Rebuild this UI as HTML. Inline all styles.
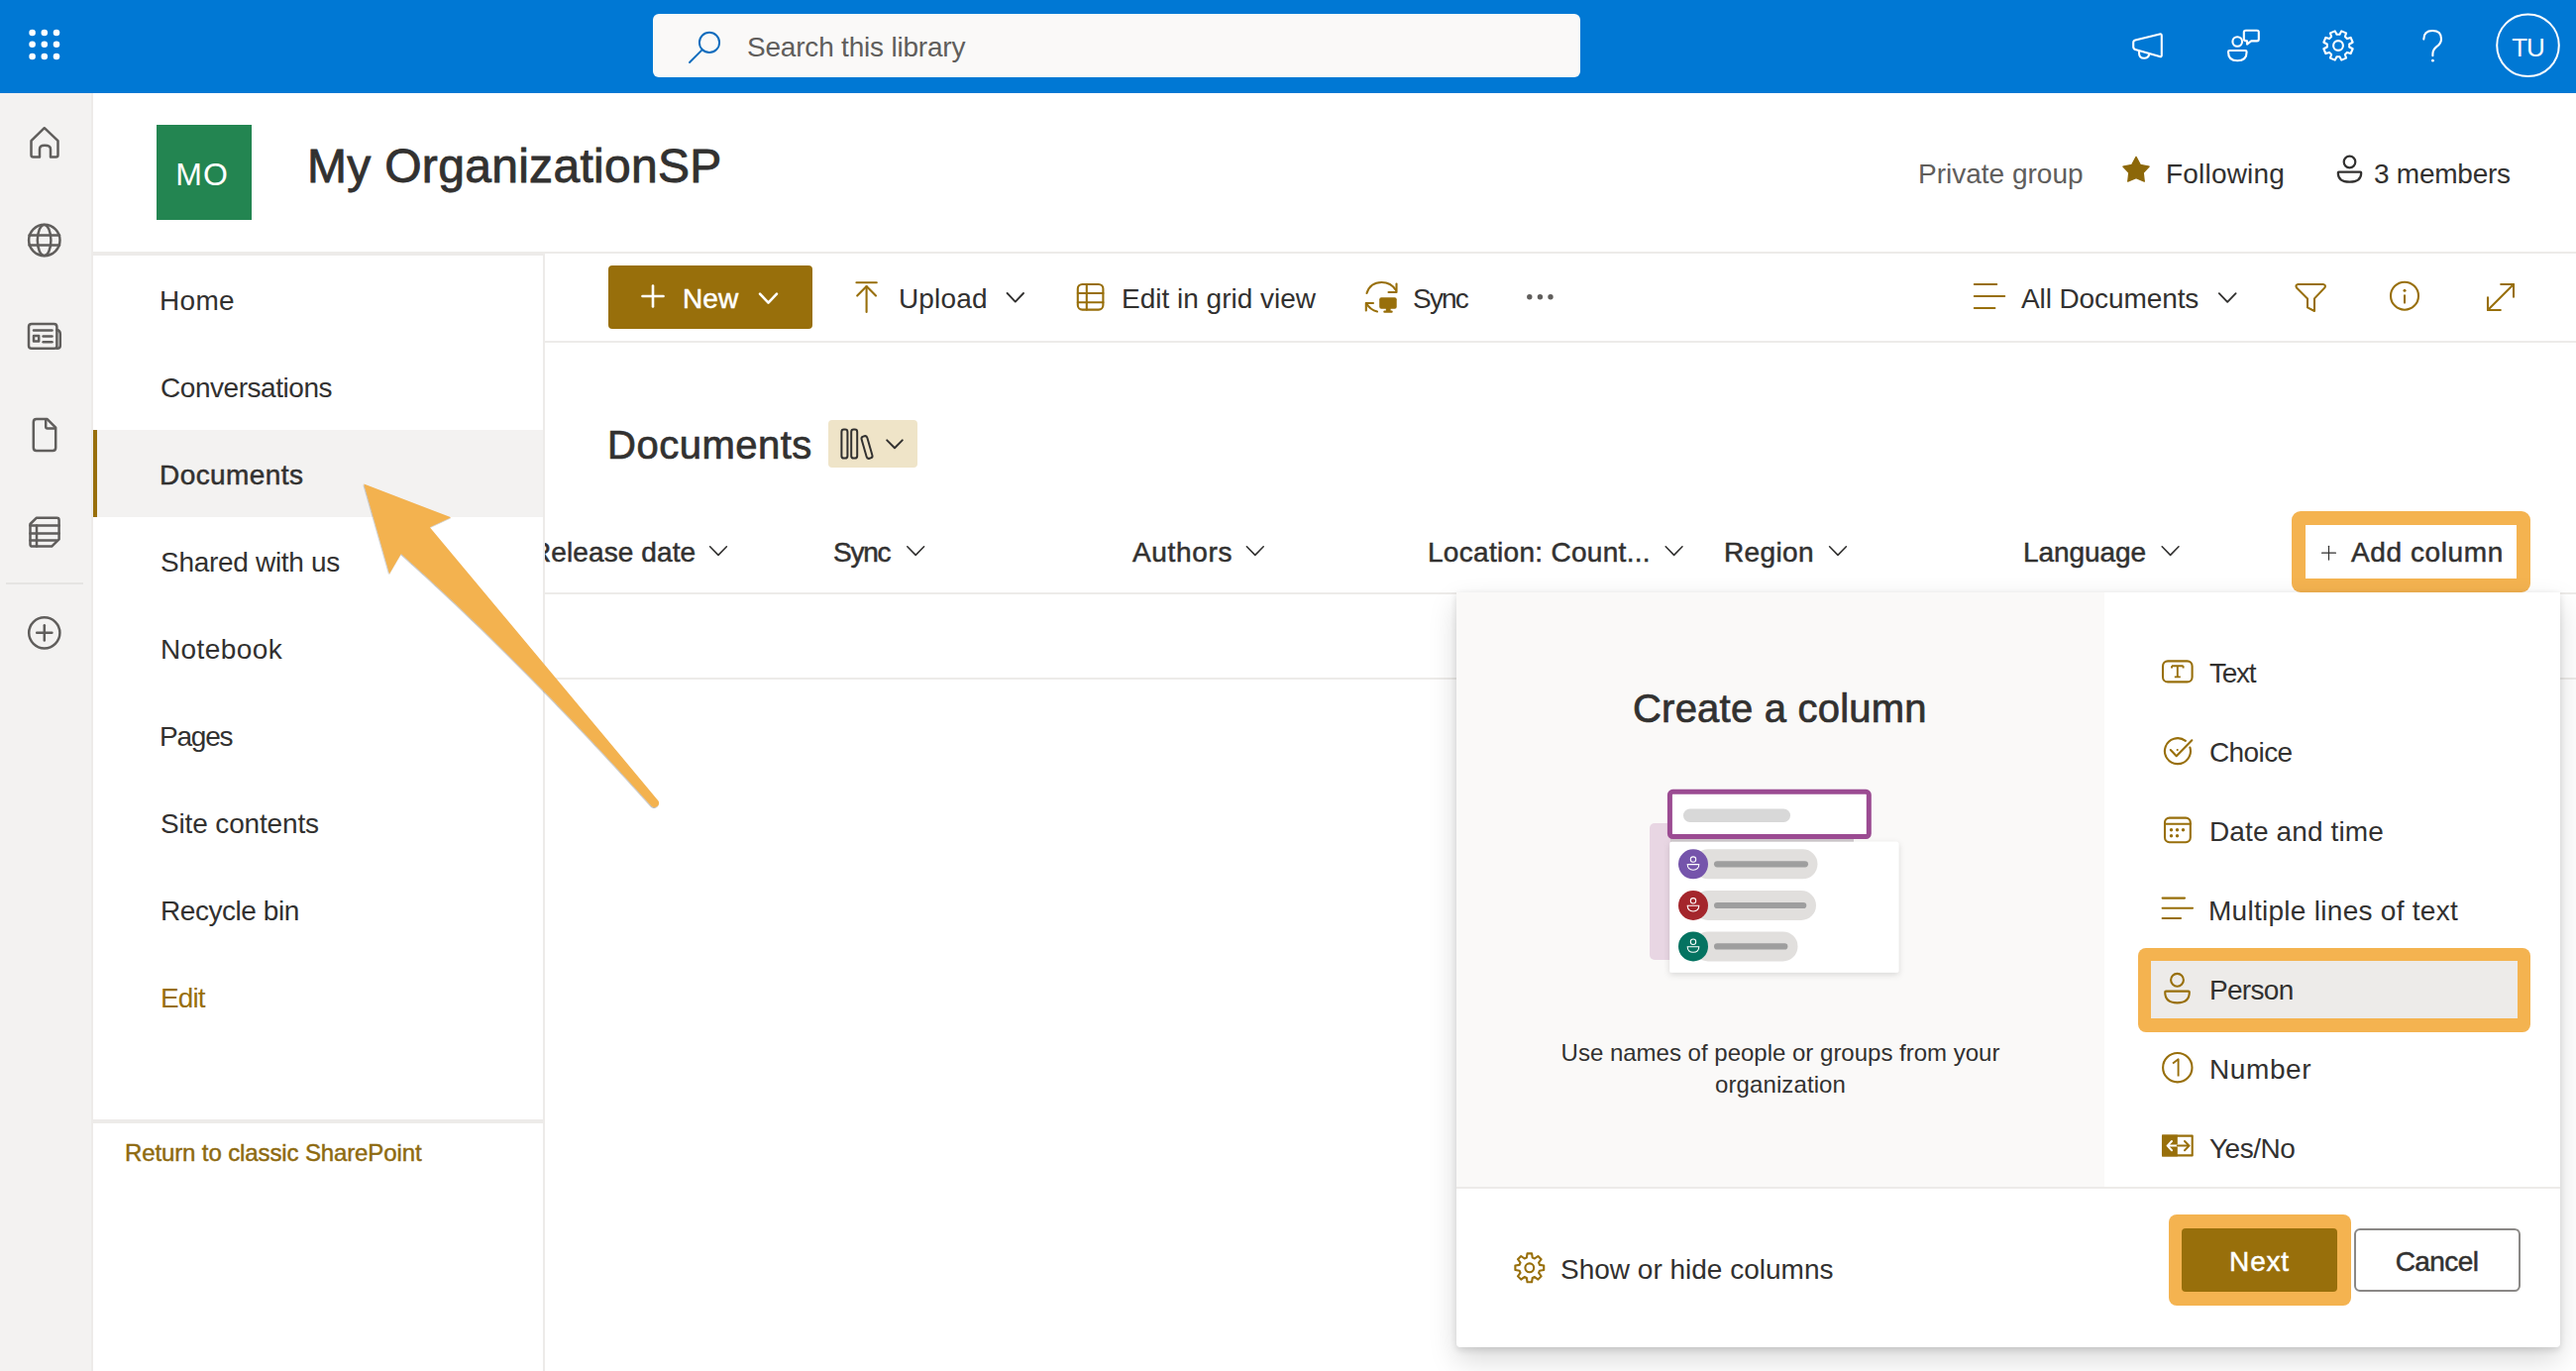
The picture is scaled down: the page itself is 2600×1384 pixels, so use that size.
<!DOCTYPE html>
<html><head><meta charset="utf-8">
<style>
html,body{margin:0;padding:0;width:2600px;height:1384px;overflow:hidden;background:#fff;font-family:"Liberation Sans",sans-serif;color:#323130}
.a{position:absolute}
.t{position:absolute;white-space:nowrap;line-height:28px;font-size:28px}
.s1{-webkit-text-stroke:0.45px currentColor}.s2{-webkit-text-stroke:0.5px currentColor}.s3{-webkit-text-stroke:0.72px currentColor}.s4{-webkit-text-stroke:0.86px currentColor}
svg{position:absolute;overflow:visible}
</style></head><body>

<!-- ===== Suite bar ===== -->
<div class="a" style="left:0;top:0;width:2600px;height:94px;background:#0078d4"></div>
<svg style="left:0;top:0" width="94" height="94">
  <g fill="#fff">
    <circle cx="32.6" cy="33" r="3.3"/><circle cx="44.8" cy="33" r="3.3"/><circle cx="57" cy="33" r="3.3"/>
    <circle cx="32.6" cy="44.8" r="3.3"/><circle cx="44.8" cy="44.8" r="3.3"/><circle cx="57" cy="44.8" r="3.3"/>
    <circle cx="32.6" cy="57" r="3.3"/><circle cx="44.8" cy="57" r="3.3"/><circle cx="57" cy="57" r="3.3"/>
  </g>
</svg>
<div class="a" style="left:659px;top:14px;width:936px;height:64px;background:#faf9f8;border-radius:6px"></div>
<svg style="left:0;top:0" width="2600" height="94">
  <g fill="none" stroke="#0f6cbd" stroke-width="1.9" stroke-linecap="round">
    <circle cx="716" cy="42.9" r="10.1"/>
    <line x1="708.6" y1="50.3" x2="696" y2="63"/>
  </g>
</svg>
<div class="t" style="left:754px;top:34px;color:#605e5c;letter-spacing:-0.2px">Search this library</div>


<div class="t" style="left:2521px;width:61px;text-align:center;top:35px;font-size:26px;line-height:26px;color:#fff;letter-spacing:-1px">TU</div>

<!-- ===== Left app rail ===== -->
<div class="a" style="left:0;top:94px;width:94px;height:1290px;background:#f3f2f1"></div>
<div class="a" style="left:92px;top:94px;width:2px;height:1290px;background:#edebe9"></div>

<!-- ===== Site header ===== -->
<div class="a" style="left:158px;top:126px;width:96px;height:96px;background:#238551"></div>
<div class="t" style="left:156px;width:96px;text-align:center;top:160px;font-size:32px;line-height:32px;color:#fff;letter-spacing:1px">MO</div>
<div class="t s4" style="left:310px;top:144px;font-size:48px;line-height:48px;letter-spacing:0.3px">My OrganizationSP</div>
<div class="t" style="left:1936px;top:162px;color:#605e5c">Private group</div>
<div class="t" style="left:2186px;top:162px;letter-spacing:0.2px">Following</div>
<div class="t" style="left:2396px;top:162px;letter-spacing:-0.25px">3 members</div>

<!-- header bottom line -->
<div class="a" style="left:94px;top:254px;width:2506px;height:2px;background:#edebe9"></div>
<div class="a" style="left:94px;top:256px;width:455px;height:2px;background:#edebe9"></div>

<!-- ===== Left nav ===== -->
<div class="a" style="left:548px;top:256px;width:2px;height:1128px;background:#edebe9"></div>
<div class="a" style="left:94px;top:434px;width:454px;height:88px;background:#f3f2f1"></div>
<div class="a" style="left:94px;top:434px;width:4px;height:88px;background:#986f0b"></div>
<div class="t" style="left:161px;top:290px;letter-spacing:0.3px">Home</div>
<div class="t" style="left:162px;top:378px;letter-spacing:-0.45px">Conversations</div>
<div class="t s2" style="left:161px;top:466px;letter-spacing:0.42px">Documents</div>
<div class="t" style="left:162px;top:554px;letter-spacing:-0.3px">Shared with us</div>
<div class="t" style="left:162px;top:642px;letter-spacing:0.4px">Notebook</div>
<div class="t" style="left:161px;top:730px;letter-spacing:-1.2px">Pages</div>
<div class="t" style="left:162px;top:818px;letter-spacing:-0.15px">Site contents</div>
<div class="t" style="left:162px;top:906px;letter-spacing:-0.45px">Recycle bin</div>
<div class="t" style="left:162px;top:994px;color:#986f0b;letter-spacing:-0.9px">Edit</div>
<div class="a" style="left:94px;top:1130px;width:454px;height:4px;background:#edebe9"></div>
<div class="t s1" style="left:126px;top:1152px;font-size:24px;line-height:24px;color:#8e6a10;letter-spacing:-0.12px">Return to classic SharePoint</div>

<!-- ===== Command bar ===== -->
<div class="a" style="left:550px;top:344px;width:2050px;height:2px;background:#edebe9"></div>
<div class="a" style="left:614px;top:268px;width:206px;height:64px;background:#986f0b;border-radius:4px"></div>
<div class="t s2" style="left:689px;top:288px;color:#fff;letter-spacing:0.05px">New</div>
<div class="t" style="left:907px;top:288px;letter-spacing:0.15px">Upload</div>
<div class="t" style="left:1132px;top:288px">Edit in grid view</div>
<div class="t" style="left:1426px;top:288px;letter-spacing:-1.8px">Sync</div>
<div class="t" style="left:2040px;top:288px;letter-spacing:-0.1px">All Documents</div>

<!-- ===== Documents title ===== -->
<div class="t s3" style="left:613px;top:429px;font-size:40px;line-height:40px;letter-spacing:0.5px">Documents</div>
<div class="a" style="left:836px;top:424px;width:90px;height:48px;background:#efe4c8;border-radius:4px"></div>

<!-- ===== Column headers ===== -->
<div class="a" style="left:550px;top:500px;width:2050px;height:100px;overflow:hidden">
  <div class="t s2" style="left:-14px;top:44px;letter-spacing:0.1px">Release date</div>
  <div class="t s2" style="left:291px;top:44px;letter-spacing:-1.25px">Sync</div>
  <div class="t s2" style="left:593px;top:44px;letter-spacing:0.65px">Authors</div>
  <div class="t s2" style="left:891px;top:44px;letter-spacing:0.3px">Location: Count...</div>
  <div class="t s2" style="left:1190px;top:44px;letter-spacing:0.35px">Region</div>
  <div class="t s2" style="left:1492px;top:44px;letter-spacing:-0.07px">Language</div>
</div>
<div class="a" style="left:550px;top:598px;width:2050px;height:2px;background:#edebe9"></div>
<div class="a" style="left:550px;top:684px;width:2050px;height:2px;background:#edebe9"></div>

<!-- Add column highlight -->
<div class="a" style="left:2313px;top:516px;width:241px;height:82px;background:#f4b350;border-radius:9px"></div>
<div class="a" style="left:2327px;top:530px;width:213px;height:54px;background:#fff"></div>
<div class="t s2" style="left:2373px;top:544px;letter-spacing:0.6px">Add column</div>

<!-- ===== Panel ===== -->
<div class="a" style="left:1470px;top:598px;width:1114px;height:762px;background:#fff;border-radius:0 0 4px 4px;box-shadow:0 12.8px 28.8px rgba(0,0,0,0.15),0 2.4px 7.2px rgba(0,0,0,0.12)"></div>
<div class="a" style="left:1470px;top:598px;width:654px;height:600px;background:#faf9f8"></div>
<div class="a" style="left:1470px;top:1198px;width:1114px;height:2px;background:#edebe9"></div>
<div class="t s3" style="left:1648px;top:695px;font-size:40px;line-height:40px;letter-spacing:0.22px">Create a column</div>
<div class="t" style="left:1470px;width:654px;text-align:center;top:1051px;font-size:24px;line-height:24px">Use names of people or groups from your</div>
<div class="t" style="left:1470px;width:654px;text-align:center;top:1083px;font-size:24px;line-height:24px;letter-spacing:0.1px">organization</div>

<!-- list -->
<div class="a" style="left:2158px;top:957px;width:396px;height:85px;background:#f4b350;border-radius:8px"></div>
<div class="a" style="left:2171px;top:970px;width:370px;height:58px;background:#edebe9"></div>
<div class="t" style="left:2230px;top:666px;letter-spacing:-1.3px">Text</div>
<div class="t" style="left:2230px;top:746px;letter-spacing:-0.6px">Choice</div>
<div class="t" style="left:2230px;top:826px;letter-spacing:0.12px">Date and time</div>
<div class="t" style="left:2229px;top:906px;letter-spacing:0.28px">Multiple lines of text</div>
<div class="t" style="left:2230px;top:986px;letter-spacing:-0.7px">Person</div>
<div class="t" style="left:2230px;top:1066px;letter-spacing:0.6px">Number</div>
<div class="t" style="left:2230px;top:1146px;letter-spacing:-0.5px">Yes/No</div>

<!-- footer -->
<div class="t" style="left:1575px;top:1268px">Show or hide columns</div>
<div class="a" style="left:2189px;top:1226px;width:184px;height:92px;background:#f4b350;border-radius:8px"></div>
<div class="a" style="left:2202px;top:1240px;width:157px;height:64px;background:#986f0b;border-radius:4px"></div>
<div class="t s2" style="left:2202px;width:157px;text-align:center;top:1260px;color:#fff;letter-spacing:0.8px">Next</div>
<div class="a" style="left:2376px;top:1240px;width:164px;height:60px;border:2px solid #8a8886;border-radius:6px;background:#fff"></div>
<div class="t s2" style="left:2376px;width:167px;text-align:center;top:1260px;letter-spacing:-0.6px">Cancel</div>

<!--ICONS-->
<svg style="left:0;top:0" width="2600" height="1384" viewBox="0 0 2600 1384">
  <!-- ===== suite bar icons ===== -->
  <g fill="none" stroke="#fff" stroke-width="2.1" stroke-linejoin="round" stroke-linecap="round">
    <path d="M2153.2 43 Q2153.2 41 2155.2 40.5 L2179.8 34.4 Q2181.8 33.9 2181.8 36 L2181.8 55.8 Q2181.8 57.8 2179.8 57.1 L2155.2 49.9 Q2153.2 49.3 2153.2 47.2 Z"/>
    <path d="M2159 51.6 L2159 53.4 Q2159 58.8 2164.2 58.8 Q2168 58.8 2169.2 55.2"/>
    <circle cx="2258.2" cy="42" r="4.8"/>
    <path d="M2249 52.4 Q2249 51 2250.4 51 L2266.2 51 Q2267.6 51 2267.6 52.4 Q2267.6 61.2 2258.3 61.2 Q2249 61.2 2249 52.4 Z"/>
    <path d="M2266.8 30.8 L2278 30.8 Q2279.8 30.8 2279.8 32.6 L2279.8 39.6 Q2279.8 41.4 2278 41.4 L2272.2 41.4 L2268 44.6 L2268 41.4 Q2264.8 41.4 2264.8 39.6 L2264.8 32.6 Q2264.8 30.8 2266.8 30.8 Z"/>
    <path d="M2371.20 47.47 L2374.64 49.25 L2372.65 54.06 L2368.96 52.88 L2366.88 54.96 L2368.06 58.65 L2363.25 60.64 L2361.47 57.20 L2358.53 57.20 L2356.75 60.64 L2351.94 58.65 L2353.12 54.96 L2351.04 52.88 L2347.35 54.06 L2345.36 49.25 L2348.80 47.47 L2348.80 44.53 L2345.36 42.75 L2347.35 37.94 L2351.04 39.12 L2353.12 37.04 L2351.94 33.35 L2356.75 31.36 L2358.53 34.80 L2361.47 34.80 L2363.25 31.36 L2368.06 33.35 L2366.88 37.04 L2368.96 39.12 L2372.65 37.94 L2374.64 42.75 L2371.20 44.53 Z"/>
    <circle cx="2360" cy="46" r="4.9"/>
    <path d="M2446.3 39.6 Q2446.3 31 2455.2 31 Q2464 31 2464 39.2 Q2464 43.8 2459.3 47.2 Q2455.4 50.2 2455.4 54.6 L2455.4 56.2"/>
  </g>
  <circle cx="2455.4" cy="61.2" r="1.4" fill="#fff"/>
  <circle cx="2551.5" cy="45.8" r="31.3" fill="none" stroke="#fff" stroke-width="2"/>

  <!-- ===== app rail icons ===== -->
  <g fill="none" stroke="#605e5c" stroke-width="2.5" stroke-linejoin="round" stroke-linecap="round">
    <path d="M31.5 142.2 L44.8 129.2 L58.5 142.2 L58.5 156.6 Q58.5 158.6 56.5 158.6 L51 158.6 L51 150.5 Q51 146.8 45 146.8 Q40 146.8 40 150.5 L40 158.6 L33.5 158.6 Q31.5 158.6 31.5 156.6 Z"/>
    <circle cx="44.8" cy="242.5" r="15.7"/>
    <ellipse cx="44.6" cy="242.5" rx="6.8" ry="15.6"/>
    <line x1="29.5" y1="237.6" x2="60" y2="237.6"/>
    <line x1="29.5" y1="247.4" x2="60" y2="247.4"/>
    <path d="M29 329.8 Q29 327 32 327 L54.5 327 Q57.4 327 57.4 330 L57.4 349.5 Q57.4 351.8 55 351.8 L32 351.8 Q29 351.8 29 349 Z"/>
    <path d="M57.4 333 Q60.8 333.5 60.8 337 L60.8 349 Q60.8 351.8 57.6 351.8"/>
    <line x1="34" y1="333.4" x2="52.5" y2="333.4"/>
    <rect x="34" y="339" width="5.2" height="5.4"/>
    <line x1="43.6" y1="339.6" x2="52.5" y2="339.6"/>
    <line x1="43.6" y1="345.2" x2="52.5" y2="345.2"/>
    <path d="M36.8 422.9 L47.4 422.9 L56.2 431.6 L56.2 452 Q56.2 455 53.2 455 L36.8 455 Q33.8 455 33.8 452 L33.8 425.9 Q33.8 422.9 36.8 422.9 Z"/>
    <path d="M46.2 423.4 L46.2 430.8 Q46.2 432.6 48 432.6 L55.6 432.6"/>
    <path d="M36.7 522.8 L57.4 522.8 Q59.6 522.8 59.6 525 L59.6 544.4 L52.2 551.6 L32.8 551.6 Q30.5 551.6 30.5 549.4 L30.5 529 Z"/>
    <line x1="30.5" y1="530.4" x2="59.6" y2="530.4"/>
    <line x1="30.5" y1="538.6" x2="59.6" y2="538.6"/>
    <line x1="30.5" y1="545.6" x2="57" y2="545.6"/>
    <line x1="37" y1="530.4" x2="37" y2="551.6"/>
    <circle cx="44.8" cy="638.8" r="15.6"/>
    <line x1="37.2" y1="638.8" x2="52.4" y2="638.8"/>
    <line x1="44.8" y1="631.2" x2="44.8" y2="646.4"/>
  </g>
  <line x1="6" y1="589" x2="84" y2="589" stroke="#e1dfdd" stroke-width="1.5"/>

  <!-- ===== header icons ===== -->
  <path d="M2156 158.4 L2160.3 166.4 L2169.2 168.1 L2163.3 174.4 L2164.3 183.2 L2156 179.6 L2147.7 183.2 L2148.7 174.4 L2142.8 168.1 L2151.7 166.4 Z" fill="#8c6709" stroke="#8c6709" stroke-width="1.2" stroke-linejoin="round"/>
  <g fill="none" stroke="#323130" stroke-width="2.2" stroke-linejoin="round">
    <circle cx="2371.5" cy="163.5" r="5.8"/>
    <path d="M2359.8 174.4 Q2359.8 173.6 2360.6 173.6 L2382.4 173.6 Q2383.2 173.6 2383.2 174.4 Q2383.2 183.6 2371.5 183.6 Q2359.8 183.6 2359.8 174.4 Z"/>
  </g>

  <!-- ===== command bar icons ===== -->
  <g fill="none" stroke="#fff" stroke-width="2.6" stroke-linecap="round" stroke-linejoin="round">
    <line x1="648.5" y1="299" x2="669.5" y2="299"/>
    <line x1="659" y1="288.5" x2="659" y2="309.5"/>
    <path d="M767 296.6 L775.5 305.6 L784 296.6"/>
  </g>
  <g fill="none" stroke="#986f0b" stroke-width="2.1" stroke-linecap="round" stroke-linejoin="round">
    <line x1="864.4" y1="285.2" x2="884.8" y2="285.2"/>
    <path d="M865.2 298.6 L874.6 289 L884 298.6"/>
    <line x1="874.6" y1="289" x2="874.6" y2="315"/>
    <rect x="1087.8" y="287" width="25.6" height="25.6" rx="4.6"/>
    <line x1="1087.8" y1="296" x2="1113.4" y2="296"/>
    <line x1="1087.8" y1="305.2" x2="1113.4" y2="305.2"/>
    <line x1="1096.8" y1="287" x2="1096.8" y2="312.6"/>
    <path d="M1379.5 296 Q1383 285 1394.5 285 Q1404 285 1409 293"/>
    <path d="M1409.5 286.5 L1409.5 295 L1401.5 295"/>
    <path d="M1390 314.5 Q1383 313 1379 306"/>
    <path d="M1378.8 313.5 L1378.8 306 L1386 306"/>
    <line x1="1992.8" y1="287" x2="2015.2" y2="287"/>
    <line x1="1992.8" y1="299" x2="2023.2" y2="299"/>
    <line x1="1992.8" y1="311" x2="2013.4" y2="311"/>
    <path d="M2319.4 287 L2344.8 287 Q2348 287.6 2346.4 290.4 L2336 301.4 L2336 314 L2329 310.4 L2329 301.4 L2318 290.4 Q2316.4 287.6 2319.4 287 Z"/>
    <circle cx="2427" cy="298.7" r="14"/>
    <line x1="2427" y1="298.4" x2="2427" y2="305.6"/>
    <line x1="2511" y1="313" x2="2537" y2="287"/>
    <path d="M2524.2 287 L2537 287 L2537 299.8"/>
    <path d="M2511 300.2 L2511 313 L2523.8 313"/>
  </g>
  <circle cx="2427" cy="293.2" r="1.5" fill="#986f0b"/>
  <rect x="1392.2" y="300.2" width="17.5" height="11.5" rx="2" fill="#986f0b"/>
  <rect x="1398.8" y="311" width="4.8" height="4" fill="#986f0b"/>
  <rect x="1396.3" y="313.6" width="9.4" height="2.2" rx="1" fill="#986f0b"/>
  <g fill="none" stroke="#323130" stroke-width="1.9" stroke-linecap="round" stroke-linejoin="round">
    <path d="M1016.6 296 L1024.8 304.6 L1033 296"/>
    <path d="M2239.8 296.2 L2248.2 304.8 L2256.6 296.2"/>
  </g>
  <g fill="#605e5c">
    <circle cx="1543.8" cy="299.8" r="2.7"/><circle cx="1554.4" cy="299.8" r="2.7"/><circle cx="1565" cy="299.8" r="2.7"/>
  </g>

  <!-- ===== Documents badge ===== -->
  <g fill="none" stroke="#323130" stroke-width="2" stroke-linejoin="round" stroke-linecap="round">
    <rect x="849.4" y="433.6" width="6" height="29" rx="2.4"/>
    <rect x="859.2" y="433.6" width="6" height="29" rx="2.4"/>
    <rect x="872" y="440" width="6" height="23" rx="2.4" transform="rotate(-16 875 451.5)"/>
    <path d="M895.2 444.4 L903 452.2 L910.8 444.4"/>
  </g>

  <!-- ===== column header chevrons ===== -->
  <g fill="none" stroke="#323130" stroke-width="1.6" stroke-linecap="round" stroke-linejoin="round">
    <path d="M716.6 551.8 L725 560.4 L733.4 551.8"/>
    <path d="M915.8 551.8 L924.2 560.4 L932.6 551.8"/>
    <path d="M1258.4 551.8 L1266.8 560.4 L1275.2 551.8"/>
    <path d="M1681.2 551.8 L1689.6 560.4 L1698 551.8"/>
    <path d="M1846.6 551.8 L1855 560.4 L1863.4 551.8"/>
    <path d="M2182.2 551.8 L2190.6 560.4 L2199 551.8"/>
  </g>
  <g fill="none" stroke="#323130" stroke-width="1.2" stroke-linecap="round">
    <line x1="2343.6" y1="558.2" x2="2357.4" y2="558.2"/>
    <line x1="2350.5" y1="551.3" x2="2350.5" y2="565.1"/>
  </g>
</svg>

<svg style="left:0;top:0" width="2600" height="1384" viewBox="0 0 2600 1384">
  <!-- ===== illustration ===== -->
  <defs>
    <filter id="cs" x="-20%" y="-20%" width="140%" height="150%">
      <feDropShadow dx="0" dy="2" stdDeviation="3" flood-color="#000" flood-opacity="0.14"/>
    </filter>
    <filter id="as" x="-10%" y="-10%" width="120%" height="120%">
      <feDropShadow dx="-0.5" dy="0.8" stdDeviation="0.7" flood-color="#000" flood-opacity="0.35"/>
    </filter>
  </defs>
  <rect x="1665" y="831" width="40" height="138" rx="5" fill="#e8d6e3"/>
  <rect x="1686" y="846" width="185" height="5" fill="#cfc9cc"/>
  <rect x="1685.2" y="849.8" width="231.2" height="132" rx="2" fill="#fff" filter="url(#cs)"/>
  <rect x="1685.4" y="799.3" width="200.9" height="45.2" rx="3" fill="#fff" stroke="#9b4b92" stroke-width="5"/>
  <rect x="1699" y="816.6" width="108" height="13.4" rx="6.7" fill="#d8d8d8"/>
  <g>
    <rect x="1709" y="857.3" width="125.5" height="30" rx="15" fill="#e1dfdd"/>
    <rect x="1709" y="899" width="124" height="30" rx="15" fill="#e1dfdd"/>
    <rect x="1709" y="940.4" width="105.5" height="30" rx="15" fill="#e1dfdd"/>
    <rect x="1730" y="869.2" width="95" height="6.2" rx="3.1" fill="#9e9e9e"/>
    <rect x="1730" y="910.9" width="93.3" height="6.2" rx="3.1" fill="#9e9e9e"/>
    <rect x="1730" y="952.3" width="74.4" height="6.2" rx="3.1" fill="#9e9e9e"/>
    <circle cx="1709" cy="872.3" r="15" fill="#7554ab"/>
    <circle cx="1709" cy="914" r="15" fill="#a4262c"/>
    <circle cx="1709" cy="955.4" r="15" fill="#047361"/>
  </g>
  <g fill="none" stroke="#fff" stroke-width="1.05">
    <circle cx="1709" cy="867.6" r="2.7"/>
    <path d="M1703.2 872.6 L1714.8 872.6 Q1714.8 878.2 1709 878.2 Q1703.2 878.2 1703.2 872.6 Z"/>
    <circle cx="1709" cy="909.3" r="2.7"/>
    <path d="M1703.2 914.3 L1714.8 914.3 Q1714.8 919.9 1709 919.9 Q1703.2 919.9 1703.2 914.3 Z"/>
    <circle cx="1709" cy="950.7" r="2.7"/>
    <path d="M1703.2 955.7 L1714.8 955.7 Q1714.8 961.3 1709 961.3 Q1703.2 961.3 1703.2 955.7 Z"/>
  </g>

  <!-- ===== list icons ===== -->
  <g fill="none" stroke="#986f0b" stroke-width="2.1" stroke-linecap="round" stroke-linejoin="round">
    <rect x="2183" y="667.4" width="29.6" height="21" rx="5"/>
    <path d="M2197.7 757 L2197.7 757" />
    <path d="M2210.4 754.5 A13 13 0 1 1 2205.9 747.9"/>
    <path d="M2190.8 757 L2196.7 763.2 L2212.3 747.3"/>
    <rect x="2185" y="825.6" width="25.8" height="24.6" rx="4.6"/>
    <line x1="2185" y1="831.8" x2="2210.8" y2="831.8"/>
    <line x1="2182.6" y1="906.6" x2="2205" y2="906.6"/>
    <line x1="2182.6" y1="916.8" x2="2213" y2="916.8"/>
    <line x1="2182.6" y1="927" x2="2201" y2="927"/>
    <circle cx="2197.5" cy="989.3" r="6.4"/>
    <path d="M2185.2 1001.6 Q2185.2 1000.6 2186.2 1000.6 L2208.8 1000.6 Q2209.8 1000.6 2209.8 1001.6 Q2209.8 1012.4 2197.5 1012.4 Q2185.2 1012.4 2185.2 1001.6 Z"/>
    <circle cx="2197.8" cy="1077.7" r="14.7"/>
    <rect x="2183" y="1146.6" width="29.7" height="19.8"/>
    <path d="M1553.99 1276.88 L1558.22 1277.52 L1558.22 1282.08 L1553.99 1282.72 L1553.07 1284.94 L1555.61 1288.38 L1552.38 1291.61 L1548.94 1289.07 L1546.72 1289.99 L1546.08 1294.22 L1541.52 1294.22 L1540.88 1289.99 L1538.66 1289.07 L1535.22 1291.61 L1531.99 1288.38 L1534.53 1284.94 L1533.61 1282.72 L1529.38 1282.08 L1529.38 1277.52 L1533.61 1276.88 L1534.53 1274.66 L1531.99 1271.22 L1535.22 1267.99 L1538.66 1270.53 L1540.88 1269.61 L1541.52 1265.38 L1546.08 1265.38 L1546.72 1269.61 L1548.94 1270.53 L1552.38 1267.99 L1555.61 1271.22 L1553.07 1274.66 Z"/>
    <circle cx="1543.8" cy="1279.8" r="4.4"/>
  </g>
  <g fill="#986f0b">
    <circle cx="2191.5" cy="837.8" r="1.7"/><circle cx="2197.5" cy="837.8" r="1.7"/><circle cx="2203.5" cy="837.8" r="1.7"/>
    <circle cx="2191.5" cy="843.8" r="1.7"/><circle cx="2197.5" cy="843.8" r="1.7"/>
    <rect x="2182" y="1145.6" width="15.8" height="21.8"/>
  </g>
  <path d="M2192 672.2 L2203.6 672.2 M2192 672.2 L2192 674.6 M2203.6 672.2 L2203.6 674.6 M2197.8 672.2 L2197.8 683.4 M2194.8 683.4 L2200.8 683.4" fill="none" stroke="#986f0b" stroke-width="1.9"/>
  <path d="M2193 1073.4 L2198.6 1069.2 L2198.6 1086.4" fill="none" stroke="#986f0b" stroke-width="1.9" stroke-linejoin="round"/>
  <g fill="none" stroke-width="2" stroke-linecap="round" stroke-linejoin="round">
    <path d="M2187.6 1156.6 L2197.8 1156.6 M2192 1152 L2187.6 1156.6 L2192 1161.2" stroke="#fff"/>
    <path d="M2197.8 1156.6 L2209.6 1156.6 M2205 1152 L2209.6 1156.6 L2205 1161.2" stroke="#986f0b"/>
  </g>

  <!-- ===== arrow annotation ===== -->
  <path d="M367.25 488.6 L455.2 522.3 L433.8 532.3 L664.5 808.4 A4.4 4.4 0 0 1 657.6 813.7 Q524.2 665.5 404.9 559 L393.1 579.2 Z" fill="#f3b250" filter="url(#as)"/>
</svg>

<!--/ICONS-->
</body></html>
